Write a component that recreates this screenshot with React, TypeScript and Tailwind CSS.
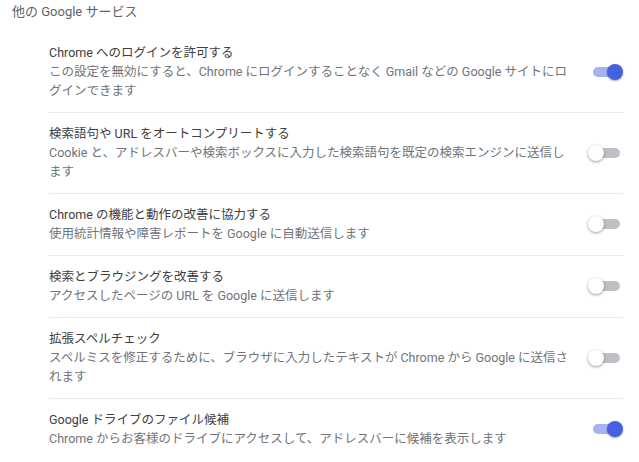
import React from 'react';

interface SettingItem {
  title: string;
  description: string;
  enabled: boolean;
}

const items: SettingItem[] = [
  {
    title: 'Chrome へのログインを許可する',
    description:
      'この設定を無効にすると、Chrome にログインすることなく Gmail などの Google サイトにログインできます',
    enabled: true,
  },
  {
    title: '検索語句や URL をオートコンプリートする',
    description:
      'Cookie と、アドレスバーや検索ボックスに入力した検索語句を既定の検索エンジンに送信します',
    enabled: false,
  },
  {
    title: 'Chrome の機能と動作の改善に協力する',
    description: '使用統計情報や障害レポートを Google に自動送信します',
    enabled: false,
  },
  {
    title: '検索とブラウジングを改善する',
    description: 'アクセスしたページの URL を Google に送信します',
    enabled: false,
  },
  {
    title: '拡張スペルチェック',
    description:
      'スペルミスを修正するために、ブラウザに入力したテキストが Chrome から Google に送信されます',
    enabled: false,
  },
  {
    title: 'Google ドライブのファイル候補',
    description: 'Chrome からお客様のドライブにアクセスして、アドレスバーに候補を表示します',
    enabled: true,
  },
];

const Toggle = ({ on }: { on: boolean }) => (
  <div className="relative w-[35px] h-4 shrink-0">
    <div
      className={`absolute left-[5px] right-[3px] top-[3px] h-[10px] rounded-full ${
        on ? 'bg-[#a6b3f3]' : 'bg-[#bdc1c6]'
      }`}
    />
    {on ? (
      <div className="absolute right-0 top-0 w-4 h-4 rounded-full bg-[#4560e0] shadow-[0_1px_2px_rgba(0,0,0,0.35)]" />
    ) : (
      <div className="absolute left-0 top-0 w-4 h-4 rounded-full bg-white shadow-[0_1px_3px_rgba(0,0,0,0.4)]" />
    )}
  </div>
);

export default function App() {
  return (
    <div
      className="w-[639px] h-[462px] bg-white overflow-hidden text-[12.5px]"
      style={{ fontFamily: 'Roboto, "Noto Sans CJK JP", sans-serif' }}
    >
      <h2 className="pl-3 pt-[2px] h-8 text-[13px] leading-[20px] font-normal text-[#5f6368]">
        他の Google サービス
      </h2>
      <div className="ml-[49px] w-[574px]">
        {items.map((item, i) => (
          <div
            key={i}
            className={`flex items-center pt-[11px] pb-3 ${i > 0 ? 'border-t border-[#e8eaed]' : ''}`}
          >
            <div className="w-[524px] leading-[19px]">
              <div className="text-[#404040]">{item.title}</div>
              <div className="text-[#707478]">{item.description}</div>
            </div>
            <div className="ml-auto">
              <Toggle on={item.enabled} />
            </div>
          </div>
        ))}
      </div>
    </div>
  );
}
